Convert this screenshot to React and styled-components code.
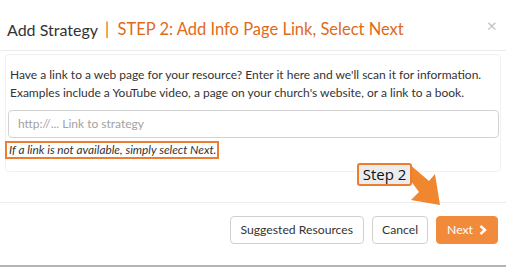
import React from 'react'
import styled, { createGlobalStyle } from 'styled-components'

const Global = createGlobalStyle`
  html, body { margin: 0; padding: 0; background: #fff; }
  body { font-family: Lato, "Open Sans", sans-serif; color: #333; }
  * { box-sizing: border-box; }
`

const Modal = styled.div`
  position: relative;
  width: 506px;
  height: 267px;
  display: flex;
  flex-direction: column;
  background: #fff;
  border-bottom: 2px solid #b4b4b4;
`

const Header = styled.div`
  height: 52px;
  display: flex;
  align-items: center;
  padding: 9px 9px 0 7px;
  border-bottom: 1px solid #ececec;
`

const Title = styled.h4`
  margin: 0;
  font-size: 16px;
  font-weight: 400;
  color: #333;
  white-space: nowrap;
`

const Step = styled.span`
  margin-left: 7px;
  font-size: 16.5px;
  color: #e06a1c;
  white-space: nowrap;
`

const Close = styled.span`
  margin-left: auto;
  margin-top: -8px;
  font-size: 18px;
  color: #c4c4c4;
  line-height: 1;
`

const Body = styled.div`
  flex: 1;
  padding: 3px 5px 30px;
  border-bottom: 1px solid #ececec;
`

const Panel = styled.div`
  border: 1px solid #f1f1f1;
  border-radius: 4px;
  padding: 11px 2px 12px 2px;
`

const Lead = styled.p`
  margin: 0 0 0 2px;
  font-size: 12px;
  line-height: 18px;
  color: #333;
`

const Input = styled.input`
  display: block;
  width: 491px;
  height: 28px;
  margin: 8px 0 0 0;
  padding: 0 9px;
  border: 1px solid #d2d2d2;
  border-radius: 4px;
  font-family: Lato, sans-serif;
  font-size: 12px;
  color: #333;
  &::placeholder { color: #a2a2a2; }
`

const Hint = styled.div`
  display: inline-block;
  margin: 0 0 0 -3px;
  padding: 0 1px 0 2px;
  border: 2px solid #ed7d31;
  font-size: 11.8px;
  line-height: 14px;
  font-style: italic;
  color: #333;
`

const Footer = styled.div`
  height: 64px;
  display: flex;
  justify-content: flex-end;
  align-items: flex-start;
  gap: 8px;
  padding: 13px 8px 0 0;
`

const Button = styled.button`
  height: 28px;
  padding: 0 ${p => p.$pad || 10}px;
  border-radius: 4px;
  font-family: Lato, sans-serif;
  font-size: 12.2px;
  display: flex;
  align-items: center;
  gap: 6px;
  border: 1px solid ${p => (p.$primary ? '#f28a3c' : '#cfcfcf')};
  background: ${p => (p.$primary ? '#f28a3c' : '#fff')};
  color: ${p => (p.$primary ? '#fff' : '#333')};
`

const Callout = styled.div`
  position: absolute;
  left: 357px;
  top: 163px;
  width: 55px;
  height: 23px;
  border: 2px solid #ed7d31;
  border-radius: 3px;
  background: #ececec;
  font-family: "Open Sans", sans-serif;
  font-size: 15px;
  line-height: 19px;
  text-align: center;
  color: #111;
  z-index: 2;
`

const Arrow = styled.svg`
  position: absolute;
  left: 400px;
  top: 165px;
  z-index: 1;
`

export default function App() {
  return (
    <>
      <Global />
      <Modal>
        <Header>
          <Title>Add Strategy</Title>
          <Step>|&nbsp;&nbsp;STEP 2: Add Info Page Link, Select Next</Step>
          <Close>×</Close>
        </Header>
        <Body>
          <Panel>
            <Lead>
              Have a link to a web page for your resource? Enter it here and we'll scan it for information.
              <br />
              Examples include a YouTube video, a page on your church's website, or a link to a book.
            </Lead>
            <Input placeholder="http://... Link to strategy" />
            <Hint>If a link is not available, simply select Next.</Hint>
          </Panel>
        </Body>
        <Footer>
          <Button>Suggested Resources</Button>
          <Button $pad={9}>Cancel</Button>
          <Button $primary $pad={10}>
            Next
            <svg width="8" height="10" viewBox="0 0 8 10">
              <path d="M1.5 1 L6 5 L1.5 9" fill="none" stroke="#fff" strokeWidth="2.4" />
            </svg>
          </Button>
        </Footer>
        <Callout>Step 2</Callout>
        <Arrow width="50" height="45" viewBox="0 0 50 45">
          <path d="M2 4 L8 -2 L29 16 L35 9 L40 40 L11 35 L19 27 Z" fill="#f0872e" />
        </Arrow>
      </Modal>
    </>
  )
}
